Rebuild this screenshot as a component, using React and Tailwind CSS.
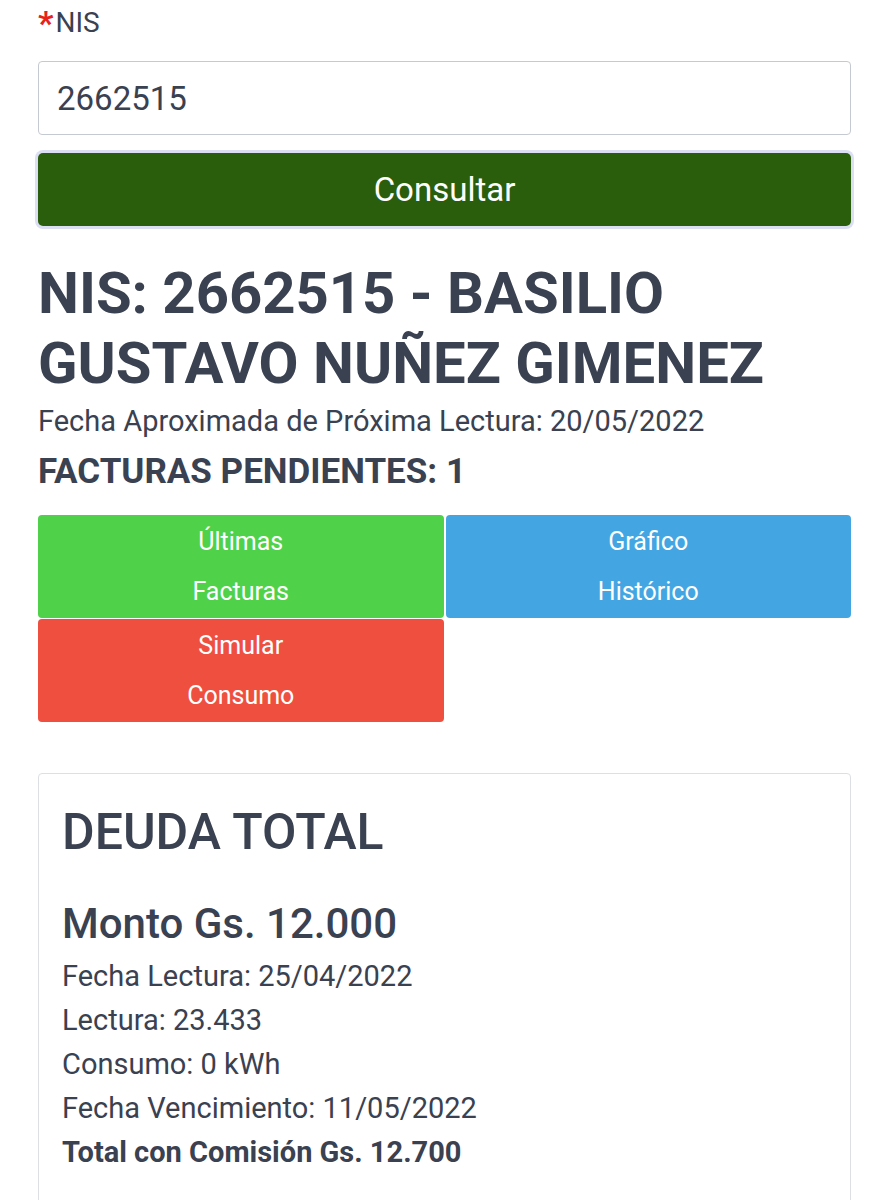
import React, { useState } from "react";

const App = () => {
  const [nis, setNis] = useState("2662515");

  return (
    <div className="min-h-[1200px] bg-white pl-[38px] pr-[32px] pt-[8px] pb-10 font-['Roboto',sans-serif] text-[#3a4150]">
      {/* NIS label */}
      <label className="flex items-start text-[28px] leading-[30px]">
        <span className="mr-[2px] text-[34px] leading-[30px] font-bold text-[#e8211a]">*</span>
        NIS
      </label>

      {/* Input */}
      <input
        value={nis}
        onChange={(e) => setNis(e.target.value)}
        className="mt-[23px] block h-[74px] w-full rounded-[4px] border-[1.5px] border-[#c5c9d1] bg-white px-[18px] text-[33px] text-[#3a4150] outline-none"
      />

      {/* Consultar button */}
      <button className="mt-[18px] flex h-[73px] w-full items-center justify-center rounded-[5px] bg-[#2b5e0c] text-[33px] text-white ring-[3px] ring-[#dcdff3]">
        Consultar
      </button>

      {/* Heading */}
      <h1 className="mt-[32px] text-[58px] leading-[70px] font-bold">
        NIS: 2662515 - BASILIO GUSTAVO NUÑEZ GIMENEZ
      </h1>
      <p className="mt-[5px] text-[29px] leading-[36px]">
        Fecha Aproximada de Próxima Lectura: 20/05/2022
      </p>
      <p className="mt-[13px] text-[35px] leading-[40px] font-bold">
        FACTURAS PENDIENTES: 1
      </p>

      {/* Action buttons */}
      <div className="mt-[23px] grid grid-cols-2 gap-x-[2px] gap-y-[1px]">
        <button className="flex h-[103px] flex-col items-center justify-center rounded-[4px] bg-[#4fd14a] text-[25px] leading-[50px] text-white">
          <span>Últimas</span>
          <span>Facturas</span>
        </button>
        <button className="flex h-[103px] flex-col items-center justify-center rounded-[4px] bg-[#43a6e3] text-[25px] leading-[50px] text-white">
          <span>Gráfico</span>
          <span>Histórico</span>
        </button>
        <button className="flex h-[103px] flex-col items-center justify-center rounded-[4px] bg-[#ef4f3f] text-[25px] leading-[50px] text-white">
          <span>Simular</span>
          <span>Consumo</span>
        </button>
      </div>

      {/* Deuda total card */}
      <div className="mt-[51px] rounded-[4px] border border-[#dcdfe3] px-[23px] pt-[31px] pb-[60px]">
        <h2 className="text-[50px] leading-[55px] font-medium">DEUDA TOTAL</h2>
        <h3 className="mt-[40px] text-[42px] leading-[48px] font-medium">Monto Gs. 12.000</h3>
        <div className="mt-[6px] text-[29px] leading-[44px]">
          <p>Fecha Lectura: 25/04/2022</p>
          <p>Lectura: 23.433</p>
          <p>Consumo: 0 kWh</p>
          <p>Fecha Vencimiento: 11/05/2022</p>
          <p className="font-bold">Total con Comisión Gs. 12.700</p>
        </div>
      </div>
    </div>
  );
};

export default App;
